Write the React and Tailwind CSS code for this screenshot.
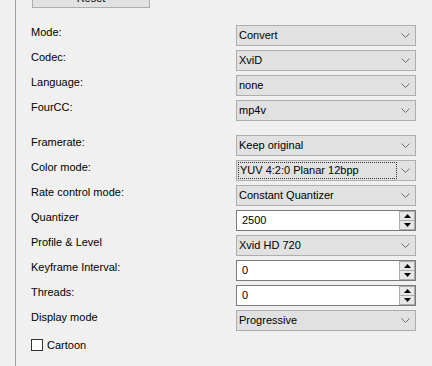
import React from "react";

const Chevron = () => (
  <svg width="9" height="5" viewBox="0 0 9 5" className="shrink-0">
    <path d="M0.5 0.5 L4.5 4.5 L8.5 0.5" fill="none" stroke="#6d6d6d" strokeWidth="1" />
  </svg>
);

const Combo = ({ value, focused }) => (
  <div className="w-[180px] h-[21px] bg-[#e1e1e1] border border-[#adadad] flex items-center">
    {focused ? (
      <div className="ml-[1px] w-[159px] h-[17px] border border-dotted border-[#333] flex items-center pl-[1px] leading-[15px] whitespace-nowrap">
        {value}
      </div>
    ) : (
      <div className="flex-1 pl-[2px] leading-[19px] whitespace-nowrap">{value}</div>
    )}
    <div className={`${focused ? "flex-1" : "w-[20px]"} flex justify-end pr-[5px]`}>
      <Chevron />
    </div>
  </div>
);

const Spin = ({ value }) => (
  <div className="w-[180px] h-[21px] bg-white border border-[#7a7a7a] flex">
    <div className="flex-1 pl-[5px] leading-[19px]">{value}</div>
    <div className="w-[16px] flex flex-col">
      <div className="flex-1 bg-[#e6e6e6] border border-[#adadad] flex items-center justify-center">
        <svg width="7" height="4" viewBox="0 0 7 4">
          <path d="M0 4 L3.5 0 L7 4 Z" fill="#000" />
        </svg>
      </div>
      <div className="flex-1 bg-[#e6e6e6] border border-t-0 border-[#adadad] flex items-center justify-center">
        <svg width="7" height="4" viewBox="0 0 7 4">
          <path d="M0 0 L3.5 4 L7 0 Z" fill="#000" />
        </svg>
      </div>
    </div>
  </div>
);

const Row = ({ label, children }) => (
  <div className="flex h-[21px]">
    <div className="w-[205px] leading-[15px]">{label}</div>
    {children}
  </div>
);

export default function App() {
  return (
    <div className="w-[432px] h-[366px] bg-[#f0f0f0] overflow-hidden flex text-[11px] text-black font-['Liberation_Sans',Arial,sans-serif]">
      <div className="w-[15px] shrink-0" />
      <div className="flex-1 border-l border-[#a0a0a0] pl-[15px]">
        <button className="block -mt-[12px] ml-[1px] w-[118px] h-[20px] bg-[#e1e1e1] border border-[#adadad] text-[11px] leading-[12px]">
          Reset
        </button>

        <div className="mt-[17px] flex flex-col gap-[4px]">
          <Row label="Mode:"><Combo value="Convert" /></Row>
          <Row label="Codec:"><Combo value="XviD" /></Row>
          <Row label="Language:"><Combo value="none" /></Row>
          <Row label="FourCC:"><Combo value="mp4v" /></Row>
        </div>

        <div className="mt-[14px] flex flex-col gap-[4px]">
          <Row label="Framerate:"><Combo value="Keep original" /></Row>
          <Row label="Color mode:"><Combo value="YUV 4:2:0 Planar 12bpp" focused /></Row>
          <Row label="Rate control mode:"><Combo value="Constant Quantizer" /></Row>
          <Row label="Quantizer"><Spin value="2500" /></Row>
          <Row label="Profile & Level"><Combo value="Xvid HD 720" /></Row>
          <Row label="Keyframe Interval:"><Spin value="0" /></Row>
          <Row label="Threads:"><Spin value="0" /></Row>
          <Row label="Display mode"><Combo value="Progressive" /></Row>
        </div>

        <label className="mt-[8px] flex items-center gap-[4px] h-[12px]">
          <span className="w-[12px] h-[12px] bg-white border border-[#333]" />
          <span className="leading-[12px]">Cartoon</span>
        </label>
      </div>
    </div>
  );
}
